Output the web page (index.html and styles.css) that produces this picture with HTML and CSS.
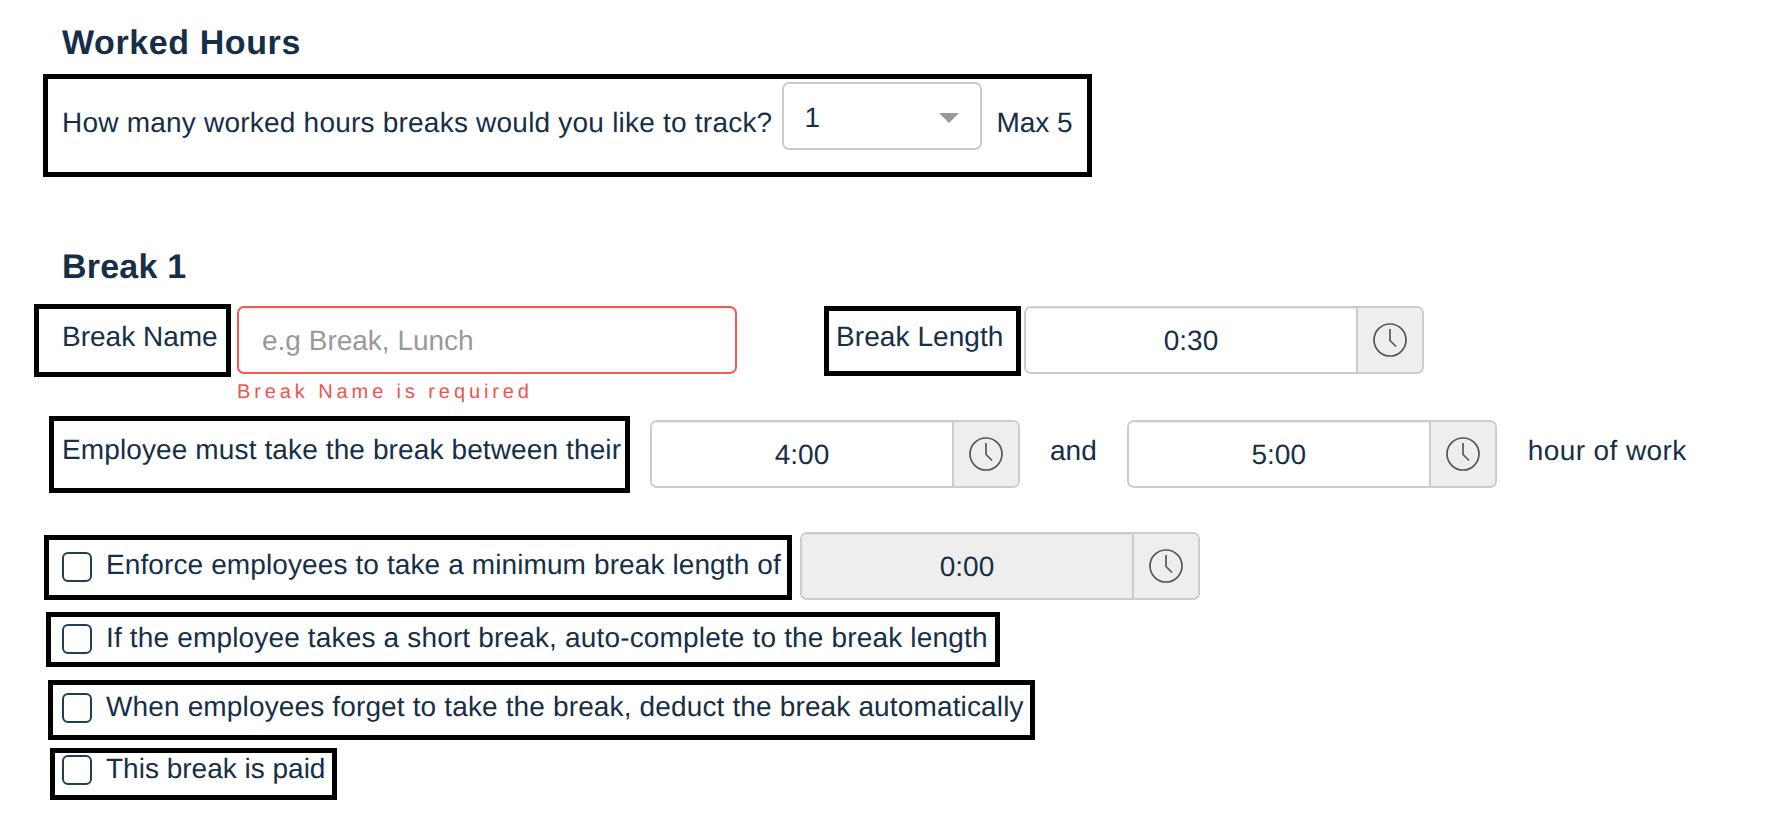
FILE: index.html
```html
<!DOCTYPE html>
<html lang="en">
<head>
<meta charset="utf-8">
<title>Worked Hours</title>
<link rel="stylesheet" href="styles.css">
</head>
<body>
<svg class="sprite" aria-hidden="true"><symbol id="clock" viewBox="0 0 34 34"><circle cx="17" cy="17" r="16" fill="none" stroke="#555" stroke-width="1.7"/><path d="M17 6V17.5L23 23.5" fill="none" stroke="#555" stroke-width="1.7"/></symbol></svg>
<main class="page">
  <h2 class="title title-first">Worked Hours</h2>
  <div class="box box-count">
    <span class="text question">How many worked hours breaks would you like to track?</span>
    <div class="select"><span class="select-value">1</span><i class="caret"></i></div>
    <span class="text max">Max 5</span>
  </div>

  <h2 class="title title-break">Break 1</h2>
  <div class="row row-name">
    <div class="box box-name"><span class="text">Break Name</span></div>
    <div class="field">
      <div class="name-input"><span class="placeholder">e.g Break, Lunch</span></div>
      <div class="error">Break Name is required</div>
    </div>
    <div class="box box-length"><span class="text">Break Length</span></div>
    <div class="time time-length"><div class="time-value">0:30</div><div class="time-addon"><svg class="clock"><use href="#clock"/></svg></div></div>
  </div>

  <div class="row row-between">
    <div class="box box-between"><span class="text">Employee must take the break between their</span></div>
    <div class="time time-from"><div class="time-value">4:00</div><div class="time-addon"><svg class="clock"><use href="#clock"/></svg></div></div>
    <span class="text word word-and">and</span>
    <div class="time time-to"><div class="time-value">5:00</div><div class="time-addon"><svg class="clock"><use href="#clock"/></svg></div></div>
    <span class="text word word-hour">hour of work</span>
  </div>

  <div class="row row-enforce">
    <label class="box box-check box-enforce"><i class="check"></i><span class="text">Enforce employees to take a minimum break length of</span></label>
    <div class="time time-min"><div class="time-value">0:00</div><div class="time-addon"><svg class="clock"><use href="#clock"/></svg></div></div>
  </div>
  <label class="box box-check box-short"><i class="check"></i><span class="text">If the employee takes a short break, auto-complete to the break length</span></label>
  <label class="box box-check box-forget"><i class="check"></i><span class="text">When employees forget to take the break, deduct the break automatically</span></label>
  <label class="box box-check box-paid"><i class="check"></i><span class="text">This break is paid</span></label>
</main>
</body>
</html>
```
FILE: styles.css
```css
* { box-sizing: border-box; }
html, body { margin: 0; background: #fff; }
body {
  font-family: "Liberation Sans", Arial, sans-serif;
  font-size: 28px;
  color: #162f47;
  overflow: hidden;
  text-rendering: geometricPrecision;
}
.sprite { position: absolute; width: 0; height: 0; }
.page { display: flex; flex-direction: column; align-items: flex-start; height: 840px; }

.title { margin: 0 0 0 62px; font-size: 34px; line-height: 38px; font-weight: 700; color: #162f47; }
.title-first { margin-top: 24px; margin-bottom: 12px; letter-spacing: .6px; }
.title-break { margin-top: 71px; margin-bottom: 18px; letter-spacing: .2px; }

.text { display: block; line-height: 32px; white-space: nowrap; }

.box { display: flex; align-items: flex-start; border: 5px solid #000; background: #fff; }
.row { display: flex; align-items: flex-start; }

.box-count { margin-left: 43px; width: 1049px; height: 103px; padding: 3px 0 0 14px; }
.box-count .text { margin-top: 25px; }
.question { letter-spacing: .22px; }
.select {
  display: flex; justify-content: space-between; align-items: flex-start;
  width: 200px; height: 68px; margin-left: 10px;
  border: 2px solid #ccc; border-radius: 7px;
  padding: 18px 21px 0 20px; background: #fff;
}
.select-value { line-height: 32px; }
.caret { width: 0; height: 0; margin-top: 11px; border: 10px solid transparent; border-top-color: #999; border-bottom: 0; }
.max { margin-left: 14px; }

.row-name { height: 101px; }
.box-name { margin-left: 34px; width: 197px; height: 73px; padding: 12px 0 0 23px; }
.field { width: 500px; margin: 2px 0 0 6px; }
.name-input {
  display: flex; align-items: center; height: 68px; padding: 1px 23px 0;
  border: 2px solid #ef5a55; border-radius: 7px;
  box-shadow: inset 0 1px 1px rgba(0,0,0,.075);
}
.placeholder { color: #999; }
.error { margin-top: 6px; font-size: 20px; line-height: 24px; letter-spacing: 3.9px; color: #ef5350; white-space: nowrap; }
.box-length { margin: 2px 0 0 87px; width: 197px; height: 70px; padding: 10px 0 0 7px; letter-spacing: .08px; }

.time { display: flex; height: 68px; border: 2px solid #ccc; border-radius: 7px; overflow: hidden; }
.time-value {
  flex: 1; display: flex; align-items: center; justify-content: center;
  padding-top: 1px;
  background: #fff; box-shadow: inset 0 1px 1px rgba(0,0,0,.075);
}
.time-addon { display: flex; align-items: center; justify-content: center; width: 66px; background: #eee; border-left: 2px solid #ccc; }
.clock { width: 34px; height: 34px; }

.time-length { width: 400px; margin: 2px 0 0 3px; }

.row-between { margin-top: 11px; }
.box-between { margin-left: 49px; width: 581px; height: 77px; padding: 13px 0 0 8px; letter-spacing: .12px; }
.time-from { width: 370px; margin: 4px 0 0 20px; }
.word { margin-top: 19px; }
.word-and { margin-left: 30px; }
.time-to { width: 370px; margin: 4px 0 0 30px; }
.word-hour { margin-left: 31px; letter-spacing: .41px; }

.row-enforce { margin-top: 39px; }
.box-check { cursor: default; }
.check { flex: none; width: 30px; height: 30px; margin-right: 14px; border: 2px solid #1d3f5a; border-radius: 6px; background: #fff; }

.box-enforce { margin: 3px 0 0 44px; width: 748px; height: 65px; padding: 9px 0 0 13px; letter-spacing: .11px; }
.box-enforce .check { margin-top: 3px; }
.time-min { width: 400px; margin-left: 8px; }
.time-min .time-value { background: #eee; }

.box-short { margin: 12px 0 0 46px; width: 954px; height: 55px; padding: 5px 0 0 11px; letter-spacing: .165px; }
.box-short .check { margin-top: 2px; }
.box-forget { margin: 13px 0 0 48px; width: 987px; height: 60px; padding: 6px 0 0 9px; letter-spacing: .145px; }
.box-forget .check { margin-top: 2px; }
.box-paid { margin: 8px 0 0 50px; width: 287px; height: 52px; padding: 0 0 0 7px; }
.box-paid .check { margin-top: 2px; }
```
